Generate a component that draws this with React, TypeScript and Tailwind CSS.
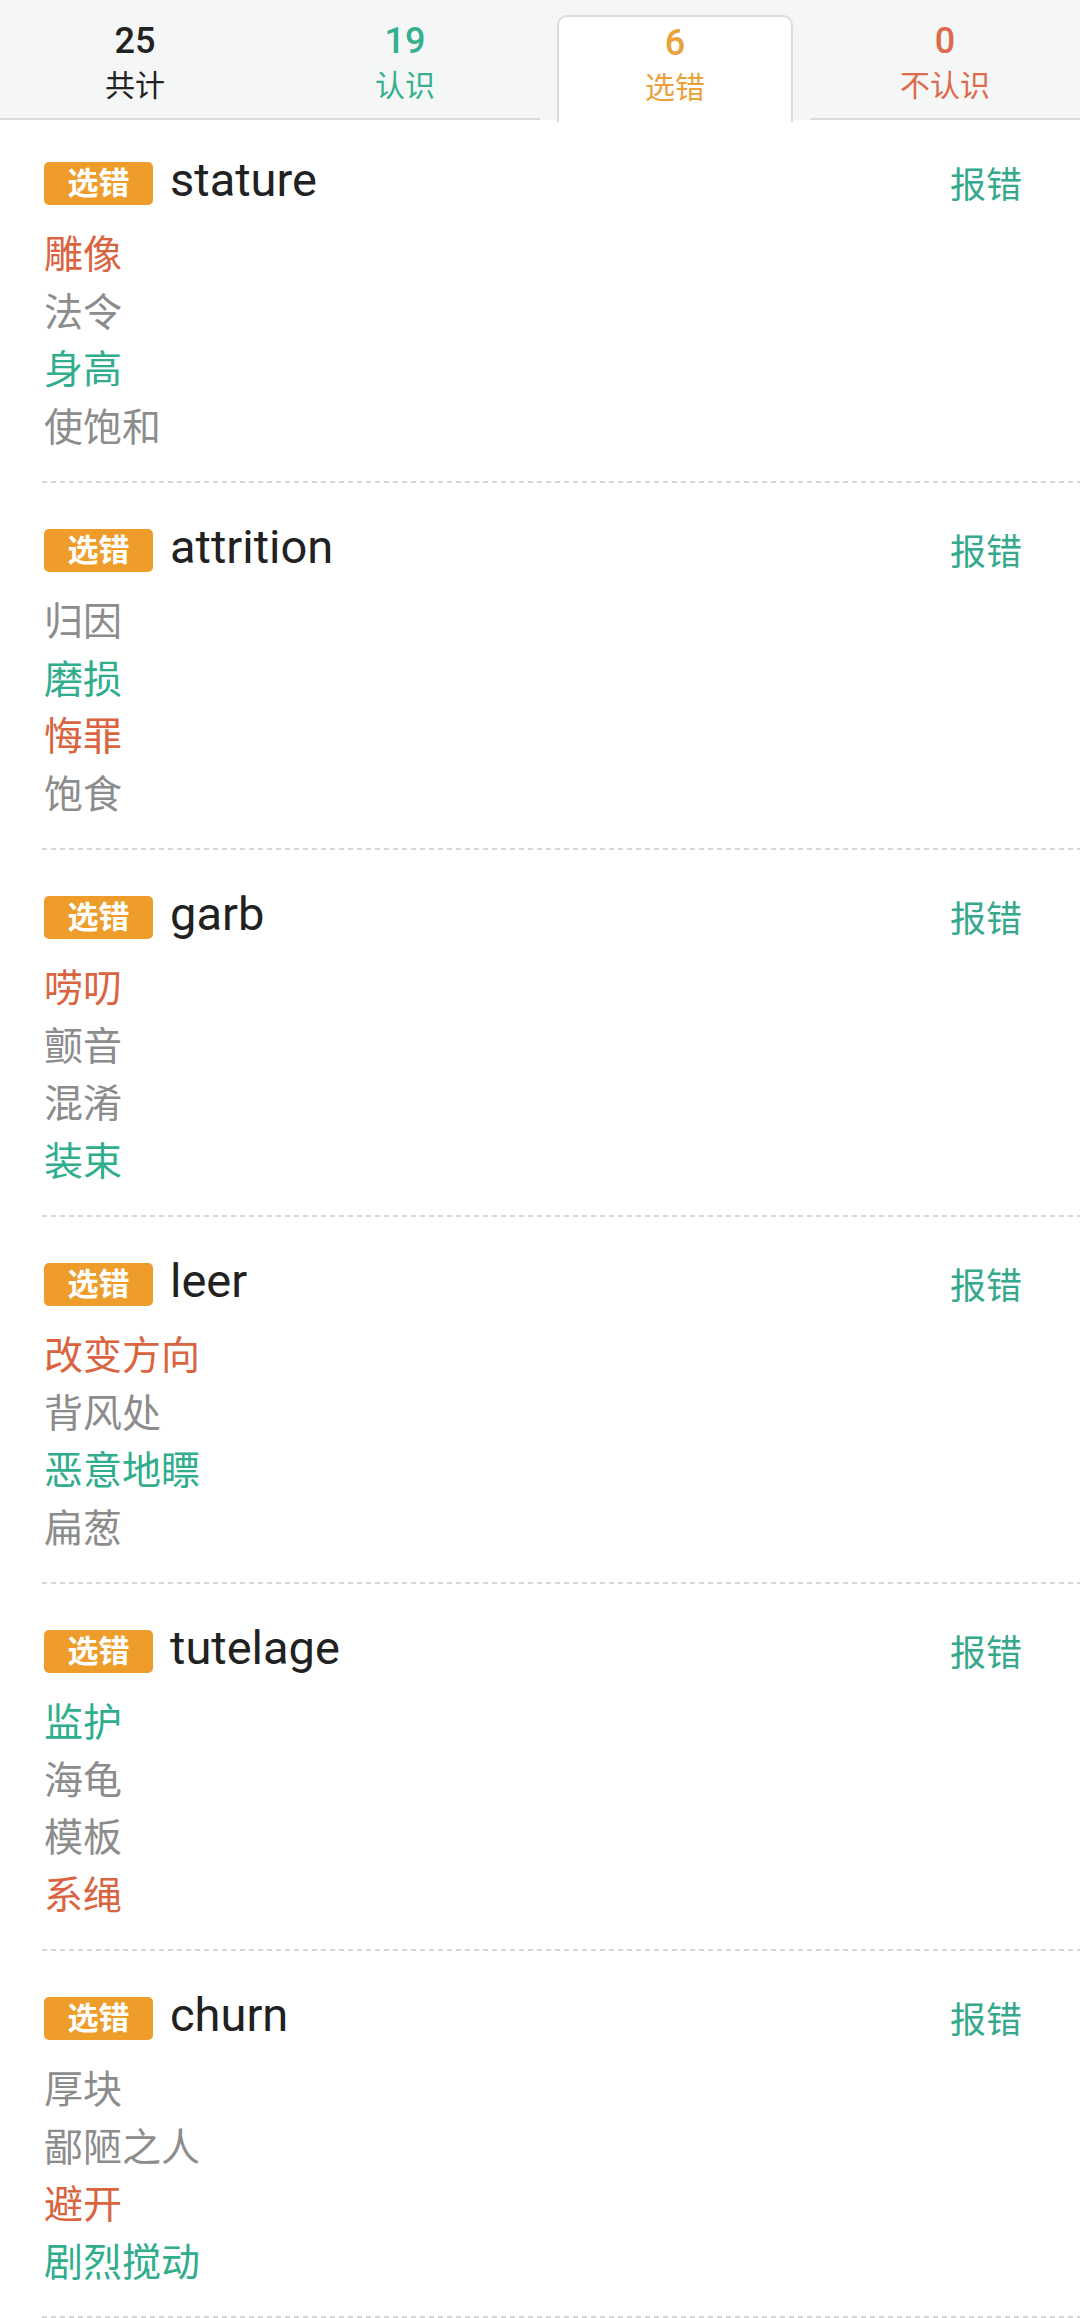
type Tone = "wrong" | "right" | "plain";

type Word = {
  word: string;
  options: { text: string; tone: Tone }[];
};

const words: Word[] = [
  {
    word: "stature",
    options: [
      { text: "雕像", tone: "wrong" },
      { text: "法令", tone: "plain" },
      { text: "身高", tone: "right" },
      { text: "使饱和", tone: "plain" },
    ],
  },
  {
    word: "attrition",
    options: [
      { text: "归因", tone: "plain" },
      { text: "磨损", tone: "right" },
      { text: "悔罪", tone: "wrong" },
      { text: "饱食", tone: "plain" },
    ],
  },
  {
    word: "garb",
    options: [
      { text: "唠叨", tone: "wrong" },
      { text: "颤音", tone: "plain" },
      { text: "混淆", tone: "plain" },
      { text: "装束", tone: "right" },
    ],
  },
  {
    word: "leer",
    options: [
      { text: "改变方向", tone: "wrong" },
      { text: "背风处", tone: "plain" },
      { text: "恶意地瞟", tone: "right" },
      { text: "扁葱", tone: "plain" },
    ],
  },
  {
    word: "tutelage",
    options: [
      { text: "监护", tone: "right" },
      { text: "海龟", tone: "plain" },
      { text: "模板", tone: "plain" },
      { text: "系绳", tone: "wrong" },
    ],
  },
  {
    word: "churn",
    options: [
      { text: "厚块", tone: "plain" },
      { text: "鄙陋之人", tone: "plain" },
      { text: "避开", tone: "wrong" },
      { text: "剧烈搅动", tone: "right" },
    ],
  },
];

const toneClass: Record<Tone, string> = {
  wrong: "text-[#d9643f]",
  right: "text-[#2fad8d]",
  plain: "text-[#8c8c8c]",
};

const tabs = [
  { count: 25, label: "共计", color: "text-[#222222]" },
  { count: 19, label: "认识", color: "text-[#35b08f]" },
  { count: 6, label: "选错", color: "text-[#e9a13a]", active: true },
  { count: 0, label: "不认识", color: "text-[#dd6a4a]" },
];

function Header() {
  return (
    <div className="grid h-[120px] grid-cols-4 bg-[#f5f7f7]">
      {tabs.map((t) =>
        t.active ? (
          <div key={t.label} className="flex flex-col px-[17px] pt-[15px]">
            <div className="-mb-[2px] flex flex-1 flex-col items-center rounded-t-[10px] border-2 border-b-0 border-[#dcdcdc] bg-white">
              <span className={`mt-[8px] text-[36px] font-medium leading-[36px] ${t.color}`}>{t.count}</span>
              <span className={`mt-[12px] text-[30px] leading-[30px] ${t.color}`}>{t.label}</span>
            </div>
          </div>
        ) : (
          <div key={t.label} className="flex flex-col items-center border-b-2 border-[#dcdcdc] pt-[23px]">
            <span className={`text-[36px] font-medium leading-[36px] ${t.color}`}>{t.count}</span>
            <span className={`mt-[12px] text-[30px] leading-[30px] ${t.color}`}>{t.label}</span>
          </div>
        ),
      )}
    </div>
  );
}

function WordCard({ item, first }: { item: Word; first: boolean }) {
  return (
    <div>
      <div className={`pl-[44px] pr-[58px] pb-[24px] ${first ? "pt-[42px]" : "pt-[46px]"}`}>
        <div className="flex h-[43px] items-center">
          <span className="flex h-[43px] w-[109px] items-center justify-center rounded-[5px] bg-[#ee9d2b] text-[31px] font-bold leading-none text-white">
            选错
          </span>
          <span className="mb-[9px] ml-[17px] text-[47px] leading-none text-[#212121]">{item.word}</span>
          <span className="ml-auto mt-[4px] text-[36px] leading-none text-[#36a98c]">报错</span>
        </div>
        <div className="mt-[22px] flex flex-col">
          {item.options.map((o) => (
            <span key={o.text} className={`text-[39px] leading-[57.5px] ${toneClass[o.tone]}`}>
              {o.text}
            </span>
          ))}
        </div>
      </div>
      <div className="ml-[42px] h-[2px] bg-[repeating-linear-gradient(90deg,#d6d6d6_0_5px,transparent_5px_9px)]" />
    </div>
  );
}

export default function App() {
  return (
    <div className="min-h-screen bg-white font-['Roboto','Noto_Sans_CJK_SC',sans-serif]">
      <Header />
      {words.map((w, i) => (
        <WordCard key={w.word} item={w} first={i === 0} />
      ))}
    </div>
  );
}
